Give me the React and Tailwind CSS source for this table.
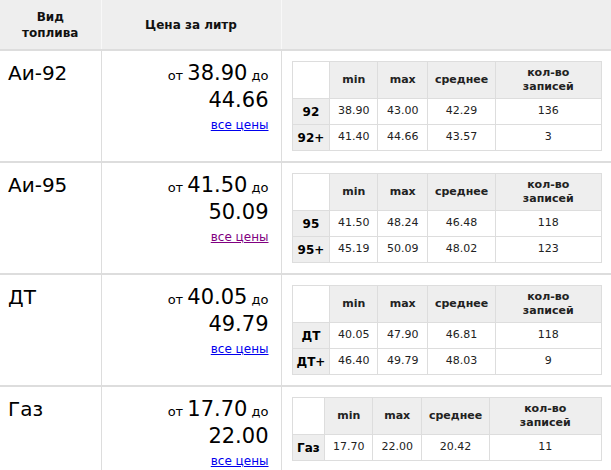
const FUELS = [
  {
    name: 'Аи-92', from: '38.90', to: '44.66', visited: false,
    widths: ['38px', '48px', '50px', '68px', '106px'],
    rows: [
      ['92', '38.90', '43.00', '42.29', '136'],
      ['92+', '41.40', '44.66', '43.57', '3'],
    ],
  },
  {
    name: 'Аи-95', from: '41.50', to: '50.09', visited: true,
    widths: ['38px', '48px', '50px', '68px', '106px'],
    rows: [
      ['95', '41.50', '48.24', '46.48', '118'],
      ['95+', '45.19', '50.09', '48.02', '123'],
    ],
  },
  {
    name: 'ДТ', from: '40.05', to: '49.79', visited: false,
    widths: ['38px', '48px', '50px', '68px', '106px'],
    rows: [
      ['ДТ', '40.05', '47.90', '46.81', '118'],
      ['ДТ+', '46.40', '49.79', '48.03', '9'],
    ],
  },
  {
    name: 'Газ', from: '17.70', to: '22.00', visited: false,
    widths: ['33px', '48px', '49px', '68px', '112px'],
    rows: [['Газ', '17.70', '22.00', '20.42', '11']],
  },
];

function StatsTable({ widths, rows }) {
  return (
    <table className="border-collapse text-[11px] text-[#222]" style={{ width: 310 }}>
      <colgroup>
        {widths.map((w, i) => (
          <col key={i} style={{ width: w }} />
        ))}
      </colgroup>
      <thead>
        <tr className="h-[37px] font-bold">
          <th className="border border-[#ddd] bg-white"></th>
          <th className="border border-[#ddd] bg-[#eee]">min</th>
          <th className="border border-[#ddd] bg-[#eee]">max</th>
          <th className="border border-[#ddd] bg-[#eee]">среднее</th>
          <th className="border border-[#ddd] bg-[#eee] leading-[14px]">
            кол-во
            <br />
            записей
          </th>
        </tr>
      </thead>
      <tbody>
        {rows.map((r) => (
          <tr key={r[0]} className="h-[26px] text-center">
            <td className="border border-[#ddd] bg-[#eee] text-[12px] font-bold text-black">{r[0]}</td>
            <td className="border border-[#ddd]">{r[1]}</td>
            <td className="border border-[#ddd]">{r[2]}</td>
            <td className="border border-[#ddd]">{r[3]}</td>
            <td className="border border-[#ddd]">{r[4]}</td>
          </tr>
        ))}
      </tbody>
    </table>
  );
}

export default function App() {
  return (
    <div className="w-[611px] overflow-hidden bg-white font-['DejaVu_Sans',Verdana,sans-serif] text-black">
      <table className="w-[611px] table-fixed border-collapse">
        <colgroup>
          <col style={{ width: 101 }} />
          <col style={{ width: 180 }} />
          <col />
        </colgroup>
        <thead>
          <tr className="h-[50px] bg-[#eee] text-[12px] font-bold leading-[16px] text-[#111]">
            <th className="border-r border-b-2 border-r-[#f8f8f8] border-b-[#ddd] text-center">
              Вид
              <br />
              топлива
            </th>
            <th className="border-r border-b-2 border-r-[#f8f8f8] border-b-[#ddd] text-center">
              Цена за литр
            </th>
            <th className="border-b-2 border-b-[#ddd]"></th>
          </tr>
        </thead>
        <tbody>
          {FUELS.map((f) => (
            <tr key={f.name}>
              <td className="border-r border-b-2 border-[#ddd] px-2 pt-[10px] align-top text-[20px] leading-[24px]">
                {f.name}
              </td>
              <td className="border-r border-b-2 border-[#ddd] pt-[10px] pr-[12px] align-top text-right">
                <div className="text-[21px] leading-[24px]">
                  <span className="text-[13px]">от </span>
                  {f.from}
                  <span className="text-[13px]"> до</span>
                </div>
                <div className="text-[21px] leading-[24px]">{f.to}</div>
                <a
                  href="#"
                  className={`text-[12px] leading-[16px] underline ${f.visited ? 'text-[#800080]' : 'text-[#0000ee]'}`}
                >
                  все цены
                </a>
              </td>
              <td className="border-b-2 border-[#ddd] py-[10px] pl-[10px] align-top">
                <StatsTable widths={f.widths} rows={f.rows} />
              </td>
            </tr>
          ))}
        </tbody>
      </table>
    </div>
  );
}
